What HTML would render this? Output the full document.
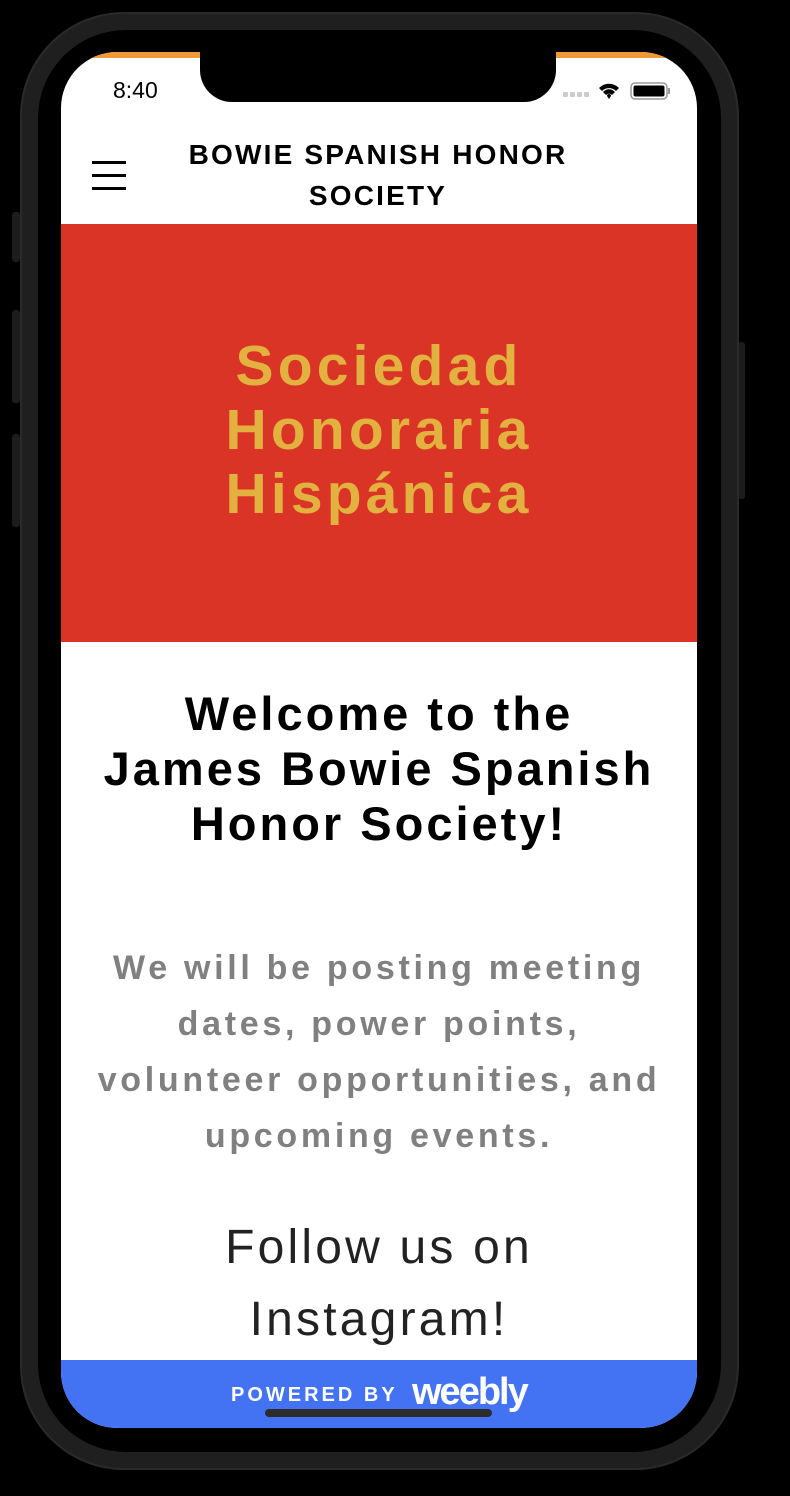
<!DOCTYPE html>
<html><head><meta charset="utf-8"><style>
*{margin:0;padding:0;box-sizing:border-box}
html,body{width:790px;height:1496px;background:#000;overflow:hidden;font-family:"Liberation Sans",sans-serif}
.btn{position:absolute;background:#1c1c1c;border-radius:3px}
.phone{position:absolute;left:20px;top:12px;width:719px;height:1458px;border-radius:104px;background:#1f1f1f;border:2px solid #2a2a2a}
.inner{position:absolute;left:16px;top:16px;width:683px;height:1422px;border-radius:88px;background:#000}
.screen{position:absolute;left:61px;top:52px;width:636px;height:1376px;border-radius:56px;background:#fff;overflow:hidden}
.orange{position:absolute;top:0;left:0;right:0;height:6px;background:#f09a37}
.notch{position:absolute;left:139px;top:0;width:356px;height:50px;background:#000;border-radius:0 0 32px 32px}
.time{position:absolute;left:52px;top:25px;font-size:23px;color:#000}
.hdr{position:absolute;top:82px;left:80px;width:474px;text-align:center;font-weight:bold;font-size:28px;line-height:41px;color:#000;letter-spacing:2.2px}
.burger{position:absolute;left:31px;top:109px;width:34px}
.burger div{height:3px;background:#000;margin-bottom:10px}
.red{position:absolute;top:172px;left:0;right:0;height:418px;background:#d93425}
.hero{position:absolute;top:110px;left:0;right:0;text-align:center;color:#e3b13f;font-weight:bold;font-size:57px;line-height:64px;letter-spacing:4.2px}
.wel{position:absolute;top:634px;left:0;right:0;text-align:center;font-weight:bold;font-size:47px;line-height:55px;color:#000;letter-spacing:3px}
.p{position:absolute;top:888px;left:0;right:0;text-align:center;font-weight:bold;font-size:34px;line-height:56px;color:#808080;letter-spacing:3.7px}
.f{position:absolute;top:1160px;left:0;right:0;text-align:center;font-size:48px;line-height:72px;color:#222;letter-spacing:3.2px}
.foot{position:absolute;top:1308px;left:0;right:0;height:68px;background:#4373f3}
.pb{position:absolute;left:170px;top:24px;color:#fff;font-weight:bold;font-size:20px;letter-spacing:3px}
.wb{position:absolute;left:351px;top:11px;color:#fff;font-weight:bold;font-size:38px;letter-spacing:-2px}
.home{position:absolute;left:265px;top:1409px;width:227px;height:8px;border-radius:4px;background:#2c2c2c}
</style></head><body>
<div class="btn" style="left:12px;top:212px;width:8px;height:50px"></div>
<div class="btn" style="left:12px;top:310px;width:8px;height:93px"></div>
<div class="btn" style="left:12px;top:434px;width:8px;height:93px"></div>
<div class="btn" style="left:738px;top:342px;width:7px;height:157px"></div>
<div class="phone"><div class="inner"></div></div>
<div class="screen">
<div class="orange"></div>
<div class="notch"></div>
<div class="time">8:40</div>
<svg style="position:absolute;left:500px;top:28px" width="112" height="22" viewBox="0 0 112 22">
<rect x="2" y="12" width="5" height="5" rx="1" fill="#ccc"/><rect x="9" y="12" width="5" height="5" rx="1" fill="#ccc"/><rect x="16" y="12" width="5" height="5" rx="1" fill="#ccc"/><rect x="23" y="12" width="5" height="5" rx="1" fill="#ccc"/>
<path d="M38 8 A14 14 0 0 1 58 8 L55 11 A10 10 0 0 0 41 11Z M42 12 A8 8 0 0 1 54 12 L51 15 A4 4 0 0 0 45 15Z M46 16 L48 19 L50 16 A2 2 0 0 0 46 16Z" fill="#000"/>
<rect x="70" y="3" width="36" height="16" rx="4" fill="none" stroke="#999" stroke-width="1.5"/><rect x="72.5" y="5.5" width="31" height="11" rx="2" fill="#000"/><rect x="107" y="8" width="2" height="6" fill="#999"/>
</svg>
<div class="burger"><div></div><div></div><div></div></div>
<div class="hdr">BOWIE SPANISH HONOR<br>SOCIETY</div>
<div class="red"><div class="hero">Sociedad<br>Honoraria<br>Hispánica</div></div>
<div class="wel">Welcome to the<br>James Bowie Spanish<br>Honor Society!</div>
<div class="p">We will be posting meeting<br>dates, power points,<br>volunteer opportunities, and<br>upcoming events.</div>
<div class="f">Follow us on<br>Instagram!</div>
<div class="foot"><div class="pb">POWERED BY</div><div class="wb">weebly</div></div>
</div>
<div class="home"></div>
</body></html>
